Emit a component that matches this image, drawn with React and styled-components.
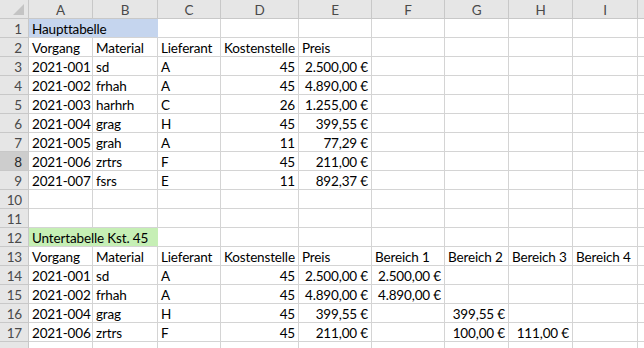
import styled, { createGlobalStyle } from "styled-components"

const GlobalStyle = createGlobalStyle`
  body {
    margin: 0;
    background: #ffffff;
    font-family: 'Lato', 'Liberation Sans', sans-serif;
  }
`

// spaltenbreiten inkl. rechter linie, J ist nur angeschnitten
const spalten = ["A", "B", "C", "D", "E", "F", "G", "H", "I", ""]
const breiten = "29px 64px 65px 63px 78px 73px 73px 64px 64px 65px 7px"

const L = (text) => ({ text })
const R = (text) => ({ text, right: true })

const zeilen = [
  [{ text: "Haupttabelle", fill: "#c5d5ee", span: 2 }],
  [L("Vorgang"), L("Material"), L("Lieferant"), L("Kostenstelle"), L("Preis")],
  [L("2021-001"), L("sd"), L("A"), R("45"), R("2.500,00 €")],
  [L("2021-002"), L("frhah"), L("A"), R("45"), R("4.890,00 €")],
  [L("2021-003"), L("harhrh"), L("C"), R("26"), R("1.255,00 €")],
  [L("2021-004"), L("grag"), L("H"), R("45"), R("399,55 €")],
  [L("2021-005"), L("grah"), L("A"), R("11"), R("77,29 €")],
  [L("2021-006"), L("zrtrs"), L("F"), R("45"), R("211,00 €")],
  [L("2021-007"), L("fsrs"), L("E"), R("11"), R("892,37 €")],
  [],
  [],
  [{ text: "Untertabelle Kst. 45", fill: "#c6efb5", span: 2 }],
  [L("Vorgang"), L("Material"), L("Lieferant"), L("Kostenstelle"), L("Preis"), L("Bereich 1"), L("Bereich 2"), L("Bereich 3"), L("Bereich 4")],
  [L("2021-001"), L("sd"), L("A"), R("45"), R("2.500,00 €"), R("2.500,00 €")],
  [L("2021-002"), L("frhah"), L("A"), R("45"), R("4.890,00 €"), R("4.890,00 €")],
  [L("2021-004"), L("grag"), L("H"), R("45"), R("399,55 €"), L(""), R("399,55 €")],
  [L("2021-006"), L("zrtrs"), L("F"), R("45"), R("211,00 €"), L(""), R("100,00 €"), R("111,00 €")],
  [],
]

function zellen(zeile) {
  const out = []
  let spalte = 0
  zeile.forEach((z) => {
    const span = z.span || 1
    out.push({ ...z, span })
    spalte += span
  })
  while (spalte < spalten.length) {
    out.push({ text: "", span: 1 })
    spalte++
  }
  return out
}

export default function App() {
  return (
    <>
      <GlobalStyle />
      <Blatt>
        <Ecke>
          <svg width="28" height="18" viewBox="0 0 28 18">
            <polygon points="24,4 24,15 13,15" fill="#c4c4c4" />
          </svg>
        </Ecke>
        {spalten.map((s, i) => (
          <SpaltenKopf key={i}>{s}</SpaltenKopf>
        ))}
        {zeilen.map((zeile, i) => (
          <Zeile key={i} nr={i + 1} zeile={zeile} />
        ))}
      </Blatt>
    </>
  )
}

function Zeile({ nr, zeile }) {
  return (
    <>
      <ZeilenKopf $aktiv={nr === 8}>{nr < 18 ? nr : ""}</ZeilenKopf>
      {zellen(zeile).map((z, j) => (
        <Zelle key={j} $span={z.span} $fill={z.fill} $right={z.right}>
          {z.text}
        </Zelle>
      ))}
    </>
  )
}

const Blatt = styled.div`
  display: grid;
  grid-template-columns: ${breiten};
  grid-auto-rows: 19px;
  width: 644px;
  height: 348px;
  overflow: hidden;
  font-size: 13.5px;
  letter-spacing: -0.15px;
  color: #000;
`

const Kopf = styled.div`
  box-sizing: border-box;
  background: #e6e6e6;
  border-right: 1px solid #c8c8c8;
  border-bottom: 1px solid #c8c8c8;
  color: #4a4a4a;
  display: flex;
  align-items: center;
  justify-content: center;
`

const Ecke = styled(Kopf)`
  svg { display: block; }
`

const SpaltenKopf = styled(Kopf)`
  padding-top: 1px;
`

const ZeilenKopf = styled(Kopf)`
  justify-content: flex-end;
  padding-right: 6px;
  padding-top: 1px;
  background: ${(p) => (p.$aktiv ? "#cdcdcd" : "#e6e6e6")};
  color: ${(p) => (p.$aktiv ? "#2a2a2a" : "#4a4a4a")};
`

const Zelle = styled.div`
  box-sizing: border-box;
  grid-column: span ${(p) => p.$span};
  background: ${(p) => p.$fill || "#ffffff"};
  border-right: 1px solid ${(p) => (p.$fill ? p.$fill : "#d4d4d4")};
  border-bottom: 1px solid #d4d4d4;
  display: flex;
  align-items: center;
  justify-content: ${(p) => (p.$right ? "flex-end" : "flex-start")};
  padding: 1px 3px 0 3px;
  white-space: nowrap;
  overflow: visible;
`
